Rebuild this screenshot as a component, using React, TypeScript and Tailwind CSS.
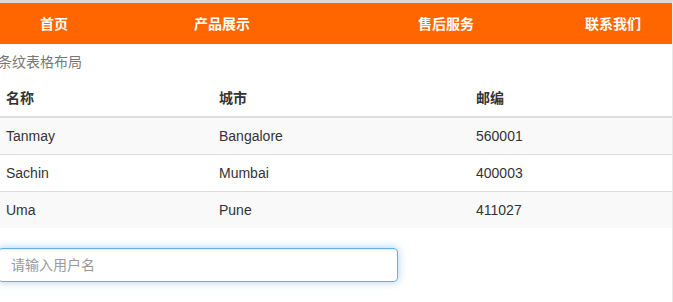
const navItems = [
  { label: '首页', cls: 'ml-[40px]' },
  { label: '产品展示', cls: 'ml-[126px]' },
  { label: '售后服务', cls: 'ml-[168px]' },
  { label: '联系我们', cls: 'ml-[111px]' },
];

const rows = [
  { name: 'Tanmay', city: 'Bangalore', zip: '560001' },
  { name: 'Sachin', city: 'Mumbai', zip: '400003' },
  { name: 'Uma', city: 'Pune', zip: '411027' },
];

export default function App() {
  return (
    <div
      className="min-h-[302px] w-[673px] border-t-[3px] border-r border-t-[#dadada] border-r-[#e8e8e8] bg-white text-[14px] leading-[20px] text-[#333] overflow-hidden"
      style={{ fontFamily: '"Liberation Sans", "Noto Sans CJK SC", sans-serif' }}
    >
      <nav className="flex h-[41px] items-center bg-[#ff6600]">
        {navItems.map((item) => (
          <span key={item.label} className={`${item.cls} font-bold text-white`}>
            {item.label}
          </span>
        ))}
      </nav>

      <div className="-ml-[2px] w-[674px]">
        <table className="mb-5 w-full border-collapse">
          <caption className="py-2 text-left text-[#777]">条纹表格布局</caption>
          <thead>
            <tr>
              <th className="w-[213px] border-b-2 border-[#ddd] p-2 text-left font-bold">名称</th>
              <th className="w-[257px] border-b-2 border-[#ddd] p-2 text-left font-bold">城市</th>
              <th className="border-b-2 border-[#ddd] p-2 text-left font-bold">邮编</th>
            </tr>
          </thead>
          <tbody>
            {rows.map((r, i) => (
              <tr key={r.name} className={i % 2 === 0 ? 'bg-[#f9f9f9]' : 'bg-white'}>
                <td className={`p-2 ${i > 0 ? 'border-t border-[#ddd]' : ''}`}>{r.name}</td>
                <td className={`p-2 ${i > 0 ? 'border-t border-[#ddd]' : ''}`}>{r.city}</td>
                <td className={`p-2 ${i > 0 ? 'border-t border-[#ddd]' : ''}`}>{r.zip}</td>
              </tr>
            ))}
          </tbody>
        </table>

        <input
          type="text"
          placeholder="请输入用户名"
          className="block h-[34px] w-[400px] rounded border border-[#66afe9] px-3 py-[6px] text-[14px] text-[#555] placeholder:text-[#999] outline-none shadow-[inset_0_1px_1px_rgba(0,0,0,0.075),0_0_8px_rgba(102,175,233,0.6)]"
        />
      </div>
    </div>
  );
}
